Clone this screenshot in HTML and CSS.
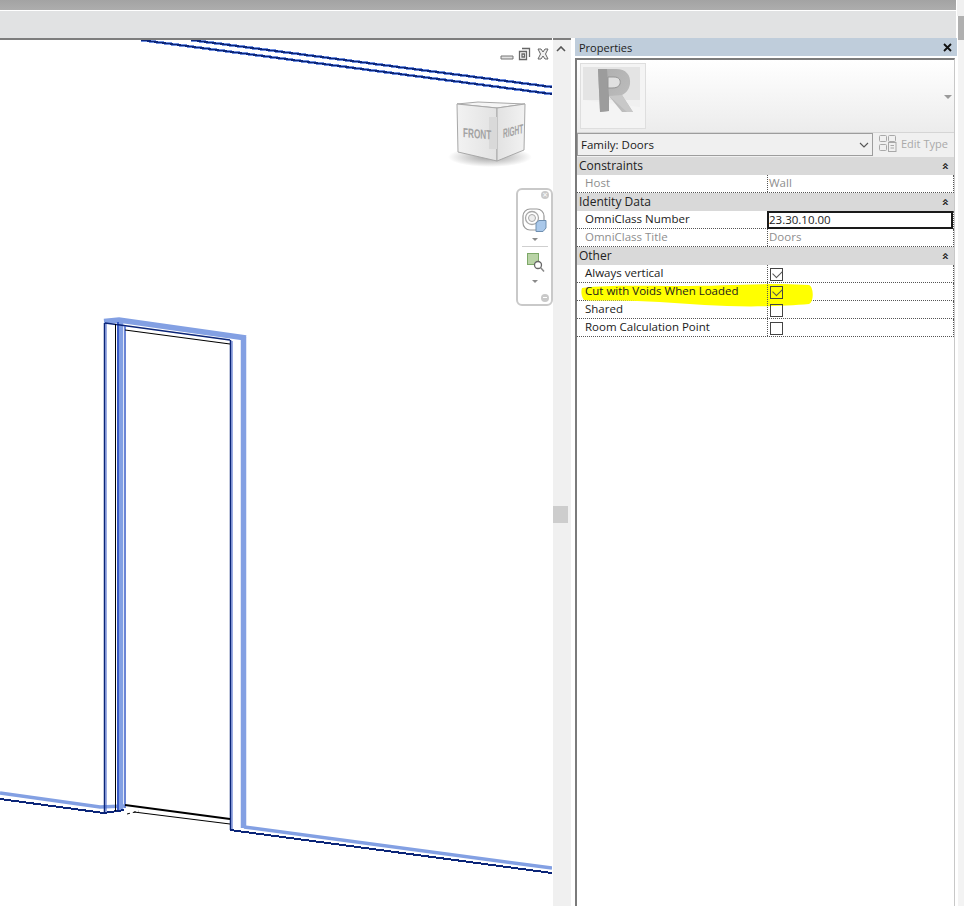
FILE: index.html
```html
<!DOCTYPE html>
<html lang="en">
<head>
<meta charset="utf-8">
<title>Properties</title>
<link rel="stylesheet" href="styles.css">
</head>
<body>
<div class="app">
  <div class="workspace">
    <div class="topbar"></div>
    <div class="ribbon"></div>
    <div class="main">
      <div class="viewport">
        <svg class="scene" width="552" height="866" viewBox="0 40 552 866" aria-hidden="true">
          <defs>
            <linearGradient id="faceL" x1="0" y1="0" x2="1" y2="0"><stop offset="0" stop-color="#f2f2f2"/><stop offset="1" stop-color="#e2e2e2"/></linearGradient>
            <linearGradient id="faceR" x1="0" y1="0" x2="1" y2="0"><stop offset="0" stop-color="#e2e2e2"/><stop offset="1" stop-color="#f2f2f2"/></linearGradient>
            <radialGradient id="shadow"><stop offset="0" stop-color="#a0a0a0"/><stop offset="1" stop-color="#ffffff"/></radialGradient>
          </defs>
          <g fill="none">
            <g class="crisp" stroke="#6d8de0" stroke-width="3">
              <path d="M141 40 L552 94"/>
              <path d="M191 40 L552 87"/>
            </g>
            <g class="crisp" stroke="#0b2578" stroke-width="1.500">
              <path d="M141 40 L552 94"/>
              <path d="M191 40 L552 87"/>
            </g>
            <g stroke="#83a0e3" stroke-width="3.500">
              <path d="M0 793 L100 807 L124 806"/>
              <path d="M244 827 L552 868"/>
            </g>
            <g stroke="#83a0e3" stroke-width="5.500">
              <path d="M104 321.500 L119 320 L246 338"/>
              <path d="M243.500 337 L243.500 828"/>
              <path d="M120.500 322 L120.500 810"/>
            </g>
            <path stroke="#3a5cc7" stroke-width="2" d="M118 322 L118 811"/>
            <path class="crisp" stroke="#0b2578" stroke-width="2" d="M0 799 L104 813 L124 810"/>
            <path class="crisp" stroke="#0b2578" stroke-width="2" d="M230 830 L552 873"/>
            <path stroke="#0b2578" stroke-width="1.500" d="M104.500 323 L104.500 813"/>
            <path stroke="#3a5cc7" stroke-width="1" d="M106 323 L106 812"/>
            <path stroke="#0b2578" stroke-width="1.500" d="M230.500 340 L230.500 830"/>
            <path stroke="#3a5cc7" stroke-width="1" d="M232 341 L232 829"/>
            <path stroke="#0b2578" stroke-width="1.500" d="M105 323 L120 325 L230 340"/>
            <path stroke="#000" stroke-width="1" d="M115.500 324 L115.500 811"/>
            <path stroke="#3a5cc7" stroke-width="1.500" d="M125 326 L125 808"/>
            <path stroke="#000" stroke-width="1.200" d="M125 330 L230 344"/>
            <path stroke="#000" stroke-width="2" d="M125 805 L230 819"/>
            <path stroke="#000" stroke-width="1" d="M134 812 L230 824"/>
            <path stroke="#000" stroke-width="1" stroke-dasharray="3 3" d="M127 814 L139 811"/>
          </g>

          <ellipse cx="490" cy="157" rx="42" ry="10" fill="url(#shadow)"/>
          <path d="M457 104 L478 102 L525 104 L497 108 Z" fill="#f5f5f5" stroke="#a8a8a8"/>
          <path d="M457 104 L497 108 L497 161 L458 152 Z" fill="url(#faceL)" stroke="#a8a8a8"/>
          <path d="M497 108 L525 104 L524 150 L497 161 Z" fill="url(#faceR)" stroke="#a8a8a8"/>
          <rect x="489" y="117" width="8" height="32" fill="#d9d9d9"/>
          <text class="cube-text" transform="translate(463 137) skewY(5) scale(.63 1)">FRONT</text>
          <text class="cube-text" transform="translate(503 138) skewY(-14) scale(.5 1)">RIGHT</text>

          <path d="M501 56 H513 V59 H501 Z" fill="#e2e2e2" stroke="#777"/>
          <path d="M522 48.500 H529.500 V57 M519.500 51.500 H526.500 V59.500 H519.500 Z M522 54 H524.500 V57 H522 Z" fill="none" stroke="#666" stroke-width="1.300"/>
          <path d="M538 49 L541 49 L543 52 L545 49 L548 49 L545.500 54 L548 59 L545 59 L543 56 L541 59 L538 59 L540.500 54 Z" fill="#f0f0f0" stroke="#666"/>
        </svg>
        <div class="navbar">
          <span class="nav-dot">&#xD7;</span>
          <svg class="nav-icon nav-wheel" width="26" height="26" viewBox="0 0 26 26" aria-hidden="true">
            <rect x="2" y="2" width="21" height="21" rx="7" fill="#fff" stroke="#9a9a9a" stroke-width="1.200"/>
            <circle cx="11" cy="11" r="6.500" fill="none" stroke="#a8a8a8" stroke-width="1.300"/>
            <circle cx="11" cy="11" r="3.500" fill="#eee" stroke="#a8a8a8"/>
            <path d="M15 16 L18 13.500 H25 V21 L22 24.500 H15 Z" fill="#a9c8ea" stroke="#6f8fb0"/>
          </svg>
          <span class="nav-caret"></span>
          <span class="nav-rule"></span>
          <svg class="nav-icon nav-zoom" width="20" height="22" viewBox="0 0 20 22" aria-hidden="true">
            <rect x="1.500" y="1.500" width="11" height="11" fill="#b9d3a6" stroke="#7da868"/>
            <circle cx="12" cy="13" r="3.500" fill="#fff" stroke="#666" stroke-width="1.300"/>
            <path d="M14.500 15.500 L18 19.500" stroke="#888" stroke-width="1.500"/>
          </svg>
          <span class="nav-caret nav-caret-low"></span>
          <span class="nav-minus"></span>
        </div>
      </div>

      <div class="scrollbar">
        <svg class="scroll-up" width="10" height="6" viewBox="0 0 10 6" aria-hidden="true"><path d="M1 5 L5 1 L9 5" fill="none" stroke="#555" stroke-width="1.600"/></svg>
        <div class="scroll-thumb"></div>
      </div>

      <aside class="panel">
        <header class="panel-title">
          <span>Properties</span>
          <svg width="9" height="9" viewBox="0 0 9 9" aria-hidden="true"><path d="M1 1 L8 8 M8 1 L1 8" stroke="#111" stroke-width="1.800"/></svg>
        </header>
        <div class="panel-frame">
          <div class="preview">
            <div class="thumb">
              <svg width="60" height="56" viewBox="0 0 60 56" aria-hidden="true">
                <defs>
                  <linearGradient id="rface" x1="0" y1="0" x2="1" y2="1"><stop offset="0" stop-color="#aeaeae"/><stop offset="1" stop-color="#c0c0c0"/></linearGradient>
                </defs>
                <rect x="0" y="2" width="57" height="33" fill="#e4e4e4"/>
                <path d="M0 35 L57 35 L57 42 Z" fill="#f0f0f0"/>
                <path d="M15 4 H33 C43 4 48 10 47 19 C46 25 43 28 39 30 L50 47 H39 L26 31 V46 L17 47 Z" fill="url(#rface)"/>
                <path d="M15 4 L24 4 L26 31 V46 L17 47 Z" fill="#9c9c9c"/>
                <path d="M25 12 H31 C36 12 38 15 37 19 C36 22 33 23 29 23 H25 Z" fill="#e0e0e0" stroke="#959595"/>
                <path d="M26 31 L39 30 L50 47 L44 47 Z" fill="#c8c8c8"/>
              </svg>
            </div>
            <span class="preview-caret"></span>
          </div>
          <div class="family-row">
            <div class="family-select">
              <span>Family: Doors</span>
              <svg width="10" height="6" viewBox="0 0 10 6" aria-hidden="true"><path d="M1 1 L5 5 L9 1" fill="none" stroke="#555" stroke-width="1.100"/></svg>
            </div>
            <div class="edit-type">
              <svg width="18" height="17" viewBox="0 0 18 17" aria-hidden="true">
                <g fill="none" stroke="#a8a8a8"><rect x=".5" y=".5" width="7" height="6" rx="1"/><rect x="9.500" y=".5" width="7" height="6" rx="1"/><rect x=".5" y="9.500" width="7" height="6" rx="1"/><rect x="9.500" y="7.500" width="7.500" height="9"/><path d="M11.500 10.500 H15 M11.500 13 H15"/></g>
              </svg>
              <span>Edit Type</span>
            </div>
          </div>

          <div class="group"><span>Constraints</span><span class="chev">&#xBB;</span></div>
          <div class="row muted"><div class="cell-name">Host</div><div class="cell-val">Wall</div></div>
          <div class="group"><span>Identity Data</span><span class="chev">&#xBB;</span></div>
          <div class="row"><div class="cell-name">OmniClass Number</div><div class="cell-val cell-input">23.30.10.00</div></div>
          <div class="row muted"><div class="cell-name">OmniClass Title</div><div class="cell-val">Doors</div></div>
          <div class="group"><span>Other</span><span class="chev">&#xBB;</span></div>
          <div class="row"><div class="cell-name">Always vertical</div><div class="cell-val"><span class="check is-on"></span></div></div>
          <div class="row">
            <svg class="highlight" width="238" height="26" viewBox="0 0 238 26" aria-hidden="true"><path d="M5 5 C30 2 60 3 100 3 C140 3 170 1 205 1 L232 2 C237 4 237 19 232 21 C210 23 180 24 150 23 C120 22 90 19 60 18 C35 17 15 18 7 17 C4 13 4 8 5 5 Z" fill="#ffff00"/></svg>
            <div class="cell-name">Cut with Voids When Loaded</div><div class="cell-val"><span class="check is-on"></span></div>
          </div>
          <div class="row"><div class="cell-name">Shared</div><div class="cell-val"><span class="check"></span></div></div>
          <div class="row"><div class="cell-name">Room Calculation Point</div><div class="cell-val"><span class="check"></span></div></div>
        </div>
      </aside>
    </div>
  </div>
  <div class="edge">
    <div class="edge-top"></div>
    <div class="edge-thumb"></div>
    <div class="edge-rest"></div>
  </div>
</div>
</body>
</html>
```
FILE: styles.css
```css
* { box-sizing: border-box; }
html, body { margin: 0; padding: 0; height: 100%; overflow: hidden; background: #fff; }
.app { width: 964px; height: 906px; display: flex; font-family: "Open Sans", "Noto Sans", sans-serif; font-size: 12px; color: #1a1a1a; }
.workspace { width: 957px; flex: none; display: flex; flex-direction: column; }

.topbar { height: 10px; background: linear-gradient(#a3a3a3, #adadad); flex: none; margin-right: 1px; }
.ribbon { height: 27px; margin-top: 1px; background: #e1e2e3; flex: none; margin-right: 1px; }
.main { flex: 1; display: flex; min-height: 0; }

.viewport { position: relative; width: 552px; flex: none; border-top: 2px solid #7d7d7d; }
.scene { display: block; position: absolute; left: 0; top: 0; }
.crisp { shape-rendering: crispEdges; }
.cube-text { font-family: "Liberation Sans", sans-serif; font-size: 13px; font-weight: 700; fill: #a2a2a2; }

.navbar { position: absolute; left: 516px; top: 148px; width: 37px; height: 118px; background: #fff; border: 2px solid #c9c9c9; border-radius: 6px; display: flex; flex-direction: column; align-items: center; padding-top: 1px; }
.nav-dot { width: 8px; height: 8px; border-radius: 50%; background: #c9c9c9; color: #fff; font-size: 9px; line-height: 8px; text-align: center; align-self: flex-end; margin-right: 2px; }
.nav-icon { display: block; }
.nav-wheel { margin-top: 8px; margin-left: -2px; }
.nav-zoom { margin-top: 5px; margin-left: 2px; }
.nav-caret { width: 0; height: 0; border: 3px solid transparent; border-top: 3px solid #8a8a8a; border-bottom: 0; margin-top: 5px; }
.nav-caret-low { margin-top: 6px; }
.nav-rule { width: 26px; height: 1px; background: #cfcfcf; margin-top: 5px; }
.nav-minus { position: relative; width: 8px; height: 8px; border-radius: 50%; background: #c9c9c9; align-self: flex-end; margin-right: 2px; margin-top: auto; margin-bottom: 2px; }
.nav-minus::after { content: ""; position: absolute; left: 2px; top: 3px; width: 4px; height: 1px; background: #fff; }

.scrollbar { position: relative; width: 18px; margin-left: 1px; background: #f0f0f0; flex: none; border-top: 2px solid #7d7d7d; }
.scroll-up { position: absolute; left: 3px; top: 6px; }
.scroll-thumb { position: absolute; left: 0; top: 466px; width: 15px; height: 17px; background: #cdcdcd; }

.panel { width: 382px; margin-left: 4px; flex: none; display: flex; flex-direction: column; }
.panel-title { height: 18px; background: #bfcddb; display: flex; align-items: center; justify-content: space-between; padding: 0 5px 0 4px; font-size: 11px; color: #1c1c1c; flex: none; }
.panel-frame { margin-top: 2px; margin-right: 2px; flex: 1; border-top: 2px solid #7b7b7b; border-left: 2px solid #7b7b7b; border-right: 1px solid #c8c8c8; background: #fff; }

.preview { height: 73px; position: relative; background: linear-gradient(#fff, #ececec); padding: 3px 0 0 3px; border-bottom: 1px solid #d5d5d5; }
.thumb { width: 66px; height: 66px; border: 1px solid #dedede; background: #f4f4f4; padding: 1px 2px; }
.thumb svg { display: block; }
.preview-caret { position: absolute; right: 2px; top: 35px; width: 0; height: 0; border: 4px solid transparent; border-top: 4px solid #9a9a9a; border-bottom: 0; }

.family-row { height: 24px; display: flex; background: #f0f0f0; }
.family-select { width: 296px; height: 23px; border: 1px solid #9d9d9d; background: #f0f0f0; display: flex; align-items: center; justify-content: space-between; padding: 0 3px; font-size: 11.500px; }
.edit-type { flex: 1; display: flex; align-items: center; gap: 4px; padding: 0 0 3px 6px; color: #a9a9a9; font-size: 11px; }
.edit-type svg { display: block; flex: none; }

.group { height: 18px; background: #d9d9d9; display: flex; align-items: center; justify-content: space-between; padding: 0 5px 1px 2px; font-size: 12px; color: #222; }
.chev { display: block; transform: rotate(-90deg); font-size: 12px; line-height: 10px; font-family: "DejaVu Sans", sans-serif; font-weight: 700; }

.row { position: relative; height: 18px; display: flex; border-bottom: 1px dotted #555; border-right: 1px dotted #555; font-size: 11.500px; }
.cell-name { position: relative; width: 190px; padding-left: 8px; line-height: 16px; flex: none; }
.cell-val { position: relative; flex: 1; border-left: 1px dotted #555; padding-left: 1px; line-height: 16px; }
.cell-input { border: 2px solid #1a1a1a; line-height: 13px; height: 18px; padding-left: 0; }
.muted { color: #8e8e8e; }

.check { display: block; width: 13px; height: 13px; margin: 3px 0 0 1px; border: 1px solid #444; position: relative; }
.is-on::after { content: ""; position: absolute; left: 2px; top: 1px; width: 8px; height: 5px; border-left: 1.500px solid #555; border-bottom: 1.500px solid #555; transform: rotate(-45deg); }

.highlight { position: absolute; left: 0; top: 0; display: block; }

.edge { flex: 1; display: flex; flex-direction: column; }
.edge-top { height: 16px; background: #f0f0f0; flex: none; }
.edge-thumb { height: 24px; background: #b0b0b0; flex: none; margin-left: 1px; }
.edge-rest { flex: 1; background: #f3f3f3; margin-left: 1px; }
```
